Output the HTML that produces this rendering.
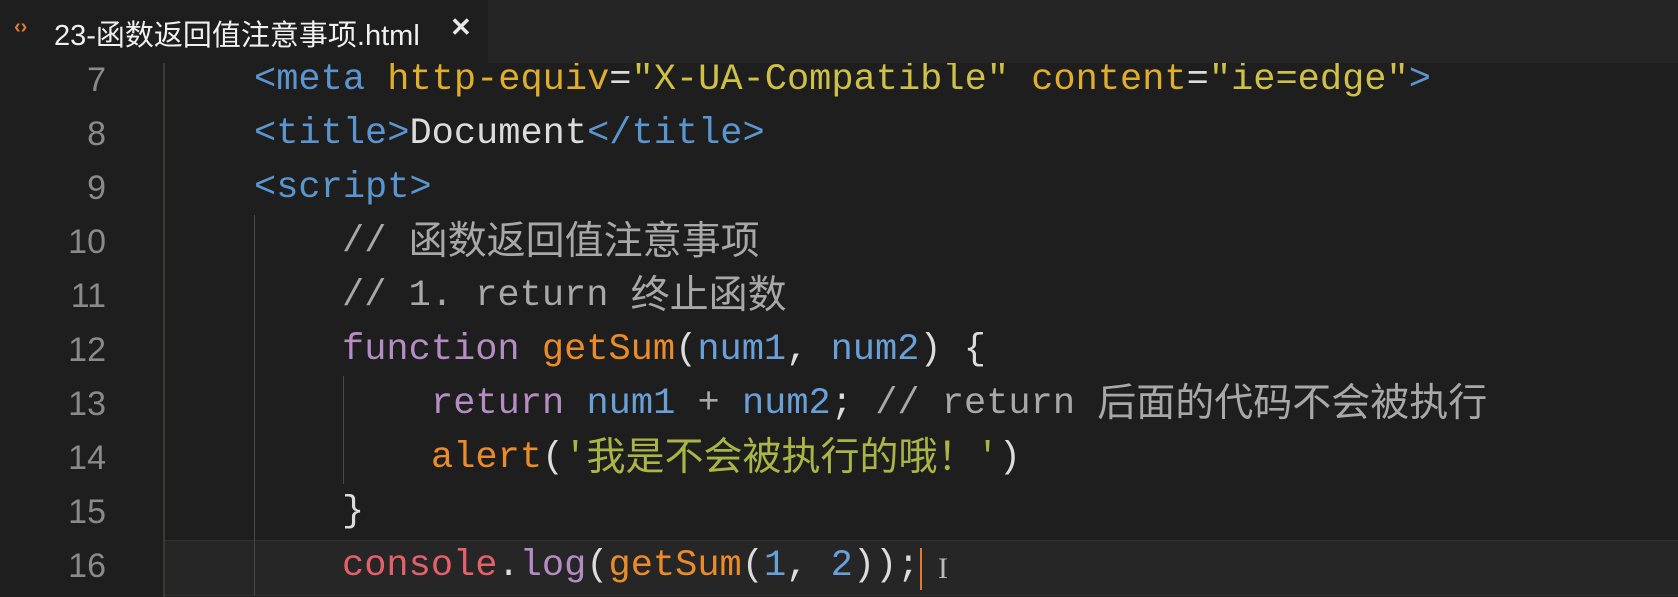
<!DOCTYPE html>
<html><head><meta charset="utf-8"><style>
html,body{margin:0;padding:0;width:1678px;height:597px;overflow:hidden;background:#1e1e1e;}
.tabbar{position:absolute;left:0;top:0;width:1678px;height:63px;background:#252526;z-index:2;}
.tab{position:absolute;left:0;top:0;width:488px;height:63px;background:#1e1e1e;}
.tab .ic{position:absolute;left:14px;top:16px;color:#e37933;font:bold 20px "Liberation Sans",sans-serif;}
.tab .nm{position:absolute;left:54px;top:12px;color:#f0f0f0;font:29px "Liberation Sans","Noto Sans CJK SC",sans-serif;letter-spacing:0px;}
.tab .x{position:absolute;left:450px;top:12px;color:#e8e8e8;font:bold 26px "Liberation Sans",sans-serif;}
.gut{position:absolute;left:163px;top:53px;width:2px;height:544px;background:#3a3a32;}
.ln{position:absolute;left:0;width:106px;text-align:right;color:#8a8a8a;font:34px "Liberation Sans",sans-serif;}
.code{position:absolute;left:0;font:37px "Liberation Mono","Noto Sans CJK SC",monospace;white-space:pre;color:#d4d4d4;}
.cj{font-size:39px;font-family:"Noto Sans CJK SC",sans-serif;display:inline-block;vertical-align:top;line-height:46px;}
.row{position:absolute;height:54px;line-height:54px;}
.hl{position:absolute;left:165px;top:540px;width:1513px;height:54px;background:#262626;border-top:1px solid #303030;border-bottom:1px solid #303030;}
.g{position:absolute;width:1px;background:#4a4a44;}
.t{color:#5b95cf}.a{color:#e0ae2c}.s{color:#cfc046}.c{color:#a8a8a8}.k{color:#b58cc4}.f{color:#ec8b2a}.p{color:#6aa0d8}.sg{color:#a9b645}.r{color:#e4616a}.w{color:#dcdcdc}
</style></head><body>
<div class="tabbar"><div class="tab"><span class="ic">‹›</span><span class="nm">23-函数返回值注意事项.html</span><span class="x">✕</span></div></div>
<div class="hl"></div>
<div class="gut"></div>
<div class="g" style="left:254px;top:215px;height:380px"></div>
<div class="g" style="left:343px;top:376px;height:108px"></div>
<div class="row ln" style="top:53px">7</div>
<div class="row ln" style="top:107px">8</div>
<div class="row ln" style="top:161px">9</div>
<div class="row ln" style="top:215px">10</div>
<div class="row ln" style="top:269px">11</div>
<div class="row ln" style="top:323px">12</div>
<div class="row ln" style="top:377px">13</div>
<div class="row ln" style="top:431px">14</div>
<div class="row ln" style="top:485px">15</div>
<div class="row ln" style="top:539px">16</div>
<div class="row code" style="top:53px;left:254px"><span class="t">&lt;meta</span> <span class="a">http-equiv</span><span class="w">=</span><span class="s">"X-UA-Compatible"</span> <span class="a">content</span><span class="w">=</span><span class="s">"ie=edge"</span><span class="t">&gt;</span></div>
<div class="row code" style="top:107px;left:254px"><span class="t">&lt;title&gt;</span><span class="w">Document</span><span class="t">&lt;/title&gt;</span></div>
<div class="row code" style="top:161px;left:254px"><span class="t">&lt;script&gt;</span></div>
<div class="row code c" style="top:215px;left:342px">// <span class="cj">函数返回值注意事项</span></div>
<div class="row code c" style="top:269px;left:342px">// 1. return <span class="cj">终止函数</span></div>
<div class="row code" style="top:323px;left:342px"><span class="k">function</span> <span class="f">getSum</span><span class="w">(</span><span class="p">num1</span><span class="w">, </span><span class="p">num2</span><span class="w">) {</span></div>
<div class="row code" style="top:377px;left:431px"><span class="k">return</span> <span class="p">num1</span> <span class="c">+</span> <span class="p">num2</span><span class="w">;</span> <span class="c">// return <span class="cj">后面的代码不会被执行</span></span></div>
<div class="row code" style="top:431px;left:431px"><span class="f">alert</span><span class="w">(</span><span class="sg">'<span class="cj">我是不会被执行的哦！</span>'</span><span class="w">)</span></div>
<div class="row code w" style="top:485px;left:342px">}</div>
<div class="row code" style="top:539px;left:342px"><span class="r">console</span><span class="w">.</span><span class="k">log</span><span class="w">(</span><span class="f">getSum</span><span class="w">(</span><span class="p">1</span><span class="w">, </span><span class="p">2</span><span class="w">));</span></div>
<div style="position:absolute;left:920px;top:548px;width:2px;height:42px;background:#e37933"></div>
<div style="position:absolute;left:938px;top:552px;color:#bbb;font:30px 'Liberation Serif',serif">I</div>
</body></html>
